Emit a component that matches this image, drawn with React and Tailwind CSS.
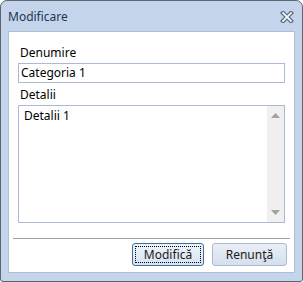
import React from "react";

export default function App() {
  const font = { fontFamily: '"Noto Sans", "Open Sans", sans-serif' };
  return (
    <div className="w-[303px] h-[282px] bg-white">
      <div
        className="w-[303px] h-[282px] rounded-t-[7px] rounded-b-[3px] border border-[#5d6570] bg-[#c4d5eb] flex flex-col"
        style={font}
      >
        {/* title bar */}
        <div className="h-[30px] flex items-center justify-between pl-[7px] pr-[8px]">
          <span className="text-[12px] leading-[15px] text-[#1e3553] pt-[1px]">Modificare</span>
          <svg width="14" height="12" viewBox="0 0 14 12" className="mt-[1px]">
            <path d="M3 2 L11 10 M11 2 L3 10" stroke="#56657a" strokeWidth="4.2" strokeLinecap="square" />
            <path d="M3 2 L11 10 M11 2 L3 10" stroke="#f4f7fb" strokeWidth="1.8" strokeLinecap="square" />
          </svg>
        </div>
        {/* client */}
        <div className="ml-[7px] w-[287px] h-[242px] bg-white border border-[#aebfd6] flex flex-col px-[9px] pt-[13px]">
          <div className="text-[12px] leading-[15px] text-black pl-[2px]">Denumire</div>
          <div className="mt-[3px] h-[20px] border border-[#abb9d4] flex items-center pl-[2px] text-[12px] text-black">
            Categoria 1
          </div>
          <div className="mt-[4px] text-[12px] leading-[15px] text-black pl-[2px]">Detalii</div>
          <div className="mt-[3px] h-[118px] border border-[#abb9d4] flex">
            <div className="flex-1 pl-[5px] pt-[2px] text-[12px] leading-[15px] text-black">Detalii 1</div>
            <div className="w-[17px] bg-[#f0f0f0] flex flex-col items-center justify-between py-[7px]">
              <svg width="9" height="5" viewBox="0 0 9 5">
                <path d="M0 5 L4.5 0 L9 5 Z" fill="#a3a3a3" />
              </svg>
              <svg width="9" height="5" viewBox="0 0 9 5">
                <path d="M0 0 L9 0 L4.5 5 Z" fill="#a3a3a3" />
              </svg>
            </div>
          </div>
          <div className="mt-[15px] -mx-[5px] h-px bg-[#a0a0a0]" />
          <div className="mt-[4px] flex justify-end gap-[8px] -mr-[2px]">
            <div className="w-[72px] h-[23px] rounded-[3px] border border-[#3c6ea8] bg-gradient-to-b from-[#eef4fb] to-[#d7e3f1] flex items-center justify-center p-[2px]">
              <div className="w-full h-full border border-dotted border-black flex items-center justify-center text-[12px] text-[#1a1a1a]">
                Modifică
              </div>
            </div>
            <div className="w-[75px] h-[23px] rounded-[3px] border border-[#a9b9cf] bg-gradient-to-b from-[#e9eff7] to-[#d5dfec] flex items-center justify-center text-[12px] text-[#1a1a1a]">
              Renunţă
            </div>
          </div>
        </div>
      </div>
    </div>
  );
}
